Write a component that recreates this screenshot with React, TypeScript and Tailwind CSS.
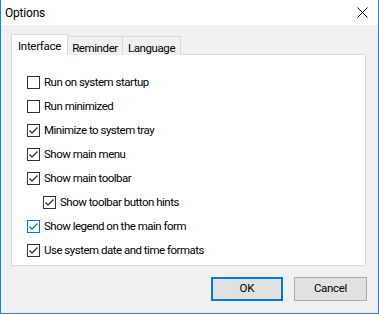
import React from "react";

const font = { fontFamily: 'Roboto, "Liberation Sans", Arial, sans-serif' };

function Check({ checked, blue }: { checked: boolean; blue?: boolean }) {
  const c = blue ? "#0078d7" : "#333333";
  return (
    <div
      className={`w-[13px] h-[13px] border bg-white flex items-center justify-center shrink-0 ${blue ? "border-[#0078d7]" : "border-[#333333]"}`}
    >
      {checked && (
        <svg width="11" height="11" viewBox="0 0 11 11">
          <path d="M1.5 5.5 L4 8 L9.5 2.5" fill="none" stroke={c} strokeWidth="1.3" />
        </svg>
      )}
    </div>
  );
}

function Row({ label, checked, blue, indent }: { label: string; checked: boolean; blue?: boolean; indent?: boolean }) {
  return (
    <div className={`flex items-center h-[13px] gap-[4px] ${indent ? "ml-[16px]" : ""}`}>
      <Check checked={checked} blue={blue} />
      <span className="text-[11.5px] tracking-[-0.5px] text-black leading-none whitespace-nowrap">{label}</span>
    </div>
  );
}

export default function App() {
  return (
    <div
      className="w-[379px] h-[314px] bg-[#f0f0f0] border-l border-r border-b border-[#1883d7] flex flex-col overflow-hidden"
      style={font}
    >
      <div className="h-[25px] bg-white flex items-center justify-between pl-[4px] pr-[10px] shrink-0">
        <span className="text-[12px] tracking-[-0.2px] text-black">Options</span>
        <svg width="11" height="11" viewBox="0 0 11 11">
          <path d="M0.5 0.5 L10.5 10.5 M10.5 0.5 L0.5 10.5" stroke="#000" strokeWidth="1" />
        </svg>
      </div>
      <div className="flex flex-col pl-[10px] pr-[12px] pt-[9px]">
        <div className="flex items-end h-[21px] relative z-10">
          <div className="h-[21px] w-[57px] bg-white border border-b-0 border-[#d9d9d9] flex items-start justify-center pt-[3px] text-[11.5px] tracking-[-0.3px] text-black">
            Interface
          </div>
          <div className="h-[19px] w-[55px] bg-[#f0f0f0] border border-l-0 border-b-0 border-[#d9d9d9] flex items-start justify-center pt-[3px] text-[11.5px] tracking-[-0.4px] text-black">
            Reminder
          </div>
          <div className="h-[19px] w-[58px] bg-[#f0f0f0] border border-l-0 border-b-0 border-[#d9d9d9] flex items-start justify-center pt-[3px] text-[11.5px] tracking-[-0.4px] text-black">
            Language
          </div>
        </div>
        <div className="h-[212px] -mt-px bg-white border border-[#d9d9d9] flex flex-col gap-[11px] pl-[15px] pt-[21px]">
          <Row label="Run on system startup" checked={false} />
          <Row label="Run minimized" checked={false} />
          <Row label="Minimize to system tray" checked />
          <Row label="Show main menu" checked />
          <Row label="Show main toolbar" checked />
          <Row label="Show toolbar button hints" checked indent />
          <Row label="Show legend on the main form" checked blue />
          <Row label="Use system date and time formats" checked />
        </div>
      </div>
      <div className="flex justify-end gap-[11px] pr-[11px] pt-[11px]">
        <button className="w-[72px] h-[24px] bg-[#e1e1e1] border-2 border-[#0078d7] text-[11.5px] text-black">
          OK
        </button>
        <button className="w-[73px] h-[24px] bg-[#e1e1e1] border border-[#adadad] text-[11.5px] tracking-[-0.3px] text-black">
          Cancel
        </button>
      </div>
    </div>
  );
}
